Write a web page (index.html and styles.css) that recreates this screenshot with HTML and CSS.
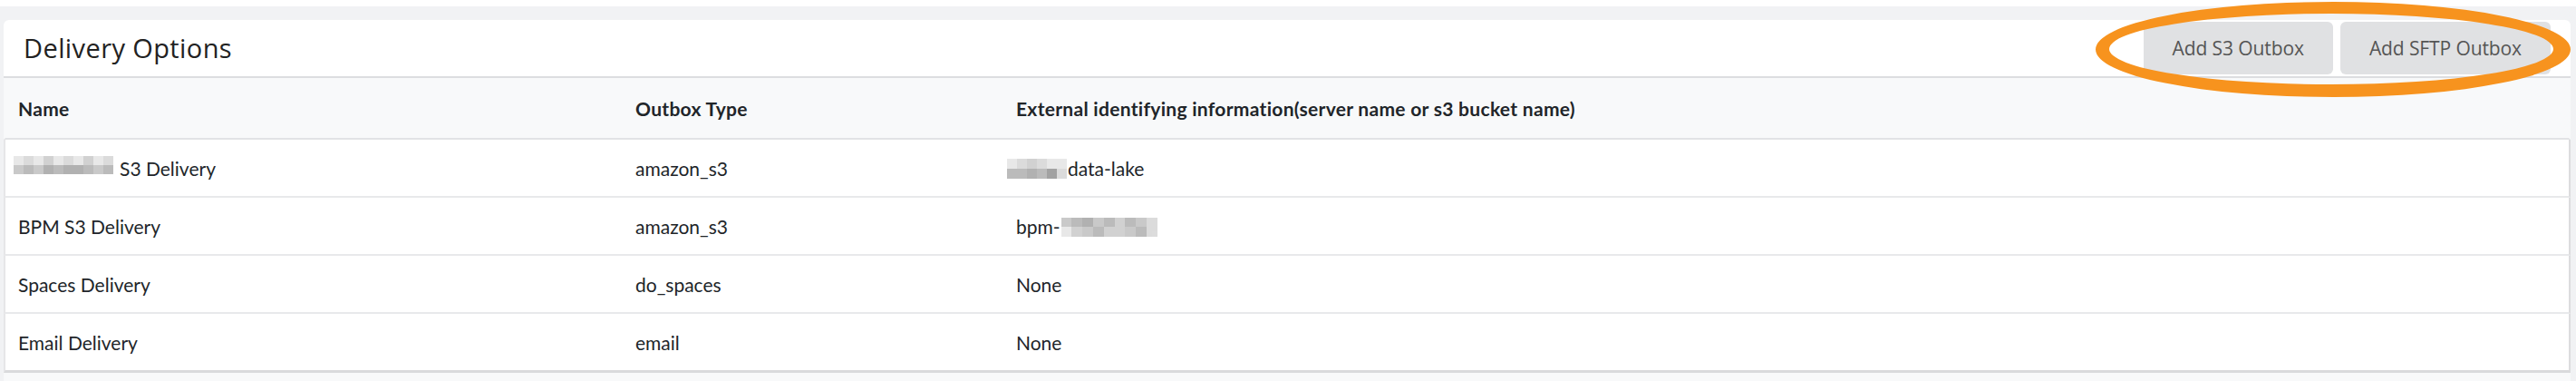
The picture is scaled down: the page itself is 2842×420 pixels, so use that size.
FILE: index.html
```html
<!DOCTYPE html>
<html lang="en">
<head>
<meta charset="utf-8">
<title>Delivery Options</title>
<link rel="stylesheet" href="styles.css">
</head>
<body>
<div class="page">
  <section class="card">
    <header class="card-head">
      <h2 class="title">Delivery Options</h2>
      <div class="actions">
        <button class="btn">Add S3 Outbox</button>
        <button class="btn">Add SFTP Outbox</button>
      </div>
    </header>
    <div class="table">
      <div class="row thead">
        <div class="cell">Name</div>
        <div class="cell">Outbox Type</div>
        <div class="cell">External identifying information(server name or s3 bucket name)</div>
      </div>
      <div class="row">
        <div class="cell"><span class="mosaic m-name"><i class="a"></i><i class="b"></i><i class="a"></i><i class="c"></i><i class="a"></i><i class="b"></i><i class="a"></i><i class="c"></i><i class="a"></i><i class="b"></i><i class="d"></i><i class="e"></i><i class="d"></i><i class="f"></i><i class="e"></i><i class="f"></i><i class="f"></i><i class="e"></i><i class="d"></i><i class="e"></i></span><span>S3 Delivery</span></div>
        <div class="cell">amazon_s3</div>
        <div class="cell"><span class="mosaic m-lake"><i class="a"></i><i class="b"></i><i class="c"></i><i class="b"></i><i class="a"></i><i class="a"></i><i class="e"></i><i class="e"></i><i class="f"></i><i class="e"></i><i class="g"></i><i class="b"></i></span><span>data-lake</span></div>
      </div>
      <div class="row">
        <div class="cell">BPM S3 Delivery</div>
        <div class="cell">amazon_s3</div>
        <div class="cell"><span>bpm-</span><span class="mosaic m-bpm"><i class="d"></i><i class="e"></i><i class="f"></i><i class="d"></i><i class="e"></i><i class="c"></i><i class="e"></i><i class="d"></i><i class="b"></i><i class="a"></i><i class="c"></i><i class="d"></i><i class="e"></i><i class="c"></i><i class="c"></i><i class="d"></i><i class="e"></i><i class="b"></i></span></div>
      </div>
      <div class="row">
        <div class="cell">Spaces Delivery</div>
        <div class="cell">do_spaces</div>
        <div class="cell">None</div>
      </div>
      <div class="row last">
        <div class="cell">Email Delivery</div>
        <div class="cell">email</div>
        <div class="cell">None</div>
      </div>
    </div>
    <div class="card-foot"></div>
  </section>
</div>
<svg class="annotation" width="542" height="120" viewBox="0 0 542 120" aria-hidden="true">
  <path fill="#f7931e" fill-rule="evenodd" d="M12 54.5a262 52.5 0 1 0 524 0a262 52.5 0 1 0 -524 0Z M27 54a245 39 0 1 0 490 0a245 39 0 1 0 -490 0Z"/>
</svg>
</body>
</html>
```

FILE: styles.css
```css
* { box-sizing: border-box; }

html, body {
  margin: 0;
  padding: 0;
  background: #ffffff;
  width: 2842px;
  height: 420px;
  overflow: hidden;
}

body {
  position: relative;
  font-family: "Lato", "Liberation Sans", sans-serif;
  color: #212529;
}

.page {
  margin-top: 7px;
  height: 413px;
  background: #f1f2f4;
  padding: 15px 6px 0 4px;
}

.card {
  background: #ffffff;
  border-radius: 6px 6px 0 0;
  height: 100%;
  display: flex;
  flex-direction: column;
}

.card-head {
  height: 64px;
  display: flex;
  align-items: flex-start;
  justify-content: space-between;
  padding: 2px 22px 0 22px;
  border-bottom: 2px solid #dcdde0;
}

.title {
  margin: 0;
  align-self: center;
  margin-top: -3px;
  font-family: "Open Sans", "Liberation Sans", sans-serif;
  font-weight: 500;
  font-size: 29px;
  letter-spacing: 0.4px;
  color: #222222;
}

.actions {
  display: flex;
  gap: 8px;
}

.btn {
  height: 58px;
  border: 0;
  border-radius: 6px;
  background: #e0e1e3;
  color: #555555;
  font-family: "Open Sans", "Liberation Sans", sans-serif;
  font-size: 21px;
  letter-spacing: -0.1px;
  padding: 0 32px;
}

.table {
  display: flex;
  flex-direction: column;
}

.row {
  display: grid;
  grid-template-columns: 681px 420px 1fr;
  align-items: center;
  height: 64px;
  background: #ffffff;
  border-left: 2px solid #e6e6e8;
  border-right: 2px solid #dcdcde;
  border-bottom: 2px solid #e8e9eb;
  font-size: 21px;
}

.row.thead {
  height: 68px;
  background: #f8f9fa;
  border-left-color: #f8f9fa;
  border-right-color: #f8f9fa;
  border-bottom-color: #e2e3e5;
  font-weight: 700;
  letter-spacing: 0.3px;
  padding-top: 1px;
}

.row.last {
  height: 65px;
  border-bottom: 3px solid #d9dadc;
}

.cell {
  padding-left: 14px;
  white-space: nowrap;
  display: flex;
  align-items: center;
}

.card-foot {
  flex: 1;
  background: #f8f9fa;
}

.mosaic {
  display: inline-grid;
  grid-auto-flow: row;
  opacity: 0.9;
}

.mosaic i {
  display: block;
  background: #d6d6d6;
}

.mosaic .a { background: #e6e6e6; }
.mosaic .b { background: #d8d8d8; }
.mosaic .c { background: #cdcdcd; }
.mosaic .d { background: #c4c4c4; }
.mosaic .e { background: #b4b4b4; }
.mosaic .f { background: #a9a9a9; }
.mosaic .g { background: #999999; }

.m-name {
  grid-template-columns: repeat(10, 11px);
  grid-template-rows: 10px 10px;
  margin-left: -5px;
  margin-right: 7px;
  margin-top: -7px;
}

.m-lake {
  grid-template-columns: repeat(6, 11px);
  grid-template-rows: 11px 11px;
  margin-left: -10px;
  margin-right: 1px;
  margin-top: 2px;
}

.m-bpm {
  grid-template-columns: repeat(9, 11.8px);
  grid-template-rows: 10.5px 10.5px;
  margin-left: 1px;
  margin-top: 2px;
}

.annotation {
  position: absolute;
  left: 2300px;
  top: 0;
  overflow: visible;
}
```
